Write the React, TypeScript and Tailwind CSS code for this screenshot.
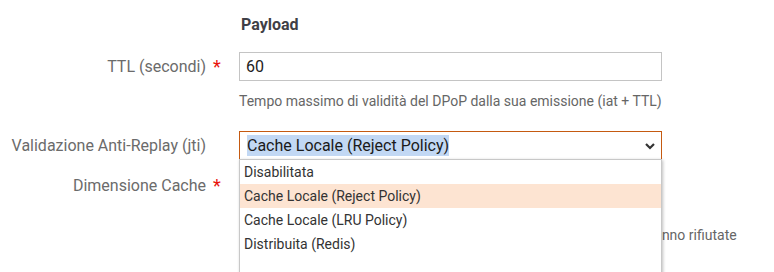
const options = [
  "Disabilitata",
  "Cache Locale (Reject Policy)",
  "Cache Locale (LRU Policy)",
  "Distribuita (Redis)",
];

function Label({ text, required }: { text: string; required?: boolean }) {
  return (
    <div className="flex h-[29px] w-[239px] shrink-0 items-center justify-end">
      <span className="text-[16px] text-[#6b6b6b]">{text}</span>
      <span className="w-[33px] pl-[7px] text-[18px] leading-none text-[#e8140c]">
        {required ? "*" : ""}
      </span>
    </div>
  );
}

export default function App() {
  return (
    <div className="h-[272px] w-[774px] overflow-hidden bg-white font-['Roboto',sans-serif]">
      <div className="pl-[241px] pt-[14px] text-[16px] font-bold leading-[21px] text-[#3f3f46]">
        Payload
      </div>

      {/* TTL */}
      <div className="mt-[17px] flex items-start">
        <Label text="TTL (secondi)" required />
        <div>
          <div className="flex h-[29px] w-[423px] items-center border border-[#c4c4c4] px-[6px] text-[16px] text-[#222]">
            60
          </div>
          <div className="mt-[10px] text-[14px] leading-[20px] text-[#666]">
            Tempo massimo di validità del DPoP dalla sua emissione (iat + TTL)
          </div>
        </div>
      </div>

      {/* Anti-replay */}
      <div className="mt-[20px] flex items-start">
        <Label text="Validazione Anti-Replay (jti)" />
        <div className="relative">
          <div className="flex h-[29px] w-[423px] items-center justify-between border border-[#c55a11] pl-[7px] pr-[5px] text-[16px] text-[#1a1a1a]">
            <span className="bg-[#c2d8f4] leading-[21px]">Cache Locale (Reject Policy)</span>
            <svg width="12" height="8" viewBox="0 0 12 8" className="mt-[1px]">
              <path d="M2 2l4 4 4-4" fill="none" stroke="#333" strokeWidth="2.2" />
            </svg>
          </div>

          {/* open list */}
          <div className="absolute left-0 top-[28px] z-10 h-[120px] w-[423px] border border-[#c8c8c8] bg-white shadow-[1px_1px_3px_rgba(0,0,0,0.25)]">
            {options.map((o, i) => (
              <div
                key={o}
                className={
                  "flex h-[24px] items-center px-[4px] text-[14px] text-[#333] " +
                  (i === 1 ? "bg-[#fde4d2]" : "")
                }
              >
                {o}
              </div>
            ))}
          </div>
        </div>
      </div>

      {/* Cache size */}
      <div className="mt-[11px] flex items-start">
        <Label text="Dimensione Cache" required />
        <div>
          <div className="flex h-[29px] w-[423px] items-center border border-[#c4c4c4] px-[6px] text-[16px] text-[#222]">
            1000
          </div>
          <div className="mt-[25px] text-[14px] leading-[20px] text-[#666]">
            Numero massimo di jti memorizzati: le richieste oltre tale limite saranno rifiutate
          </div>
        </div>
      </div>
    </div>
  );
}
